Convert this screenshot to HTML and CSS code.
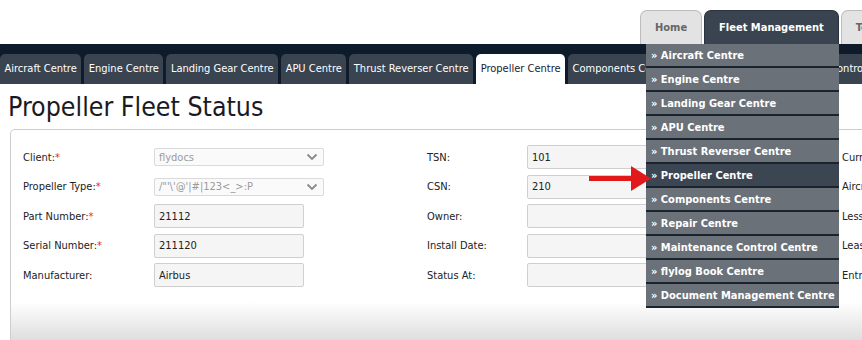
FILE: index.html
```html
<!DOCTYPE html>
<html lang="en">
<head>
    <meta charset="UTF-8">
    <meta name="viewport" content="width=device-width, initial-scale=1.0">
    <title>Propeller Fleet Status</title>
    <link rel="stylesheet" href="styles.css">
</head>
<body>
    <header class="top-bar">
        <nav class="main-tabs">
            <a class="main-tab" href="#">Home</a>
            <a class="main-tab main-tab-active" href="#">Fleet Management</a>
            <a class="main-tab" href="#">Technical</a>
        </nav>
    </header>

    <nav class="sub-nav">
        <a class="sub-tab" href="#">Aircraft Centre</a>
        <a class="sub-tab" href="#">Engine Centre</a>
        <a class="sub-tab" href="#">Landing Gear Centre</a>
        <a class="sub-tab" href="#">APU Centre</a>
        <a class="sub-tab" href="#">Thrust Reverser Centre</a>
        <a class="sub-tab sub-tab-active" href="#">Propeller Centre</a>
        <a class="sub-tab" href="#">Components Centre</a>
        <a class="sub-tab" href="#">Repair Centre</a>
        <a class="sub-tab" href="#">Maintenance Control Centre</a>
        <a class="sub-tab" href="#">flylog Book Centre</a>
    </nav>

    <main class="content">
        <h1 class="page-title">Propeller Fleet Status</h1>
        <section class="panel">
            <form class="status-form">
                <label class="field-label">Client:<span class="req">*</span></label>
                <div class="field"><div class="select-box"><span>flydocs</span><svg class="chevron" width="12" height="8" viewBox="0 0 12 8"><path d="M1.5 1.5 L6 6 L10.5 1.5" fill="none" stroke="#8a8a8a" stroke-width="1.8"/></svg></div></div>
                <label class="field-label">TSN:</label>
                <div class="field"><input class="text-input" type="text" value="101"></div>
                <label class="field-label">Current Status:</label>
                <div class="field"><input class="text-input" type="text"></div>

                <label class="field-label">Propeller Type:<span class="req">*</span></label>
                <div class="field"><div class="select-box"><span>/"'\'@'|#|123&lt;_&gt;:P</span><svg class="chevron" width="12" height="8" viewBox="0 0 12 8"><path d="M1.5 1.5 L6 6 L10.5 1.5" fill="none" stroke="#8a8a8a" stroke-width="1.8"/></svg></div></div>
                <label class="field-label">CSN:</label>
                <div class="field"><input class="text-input" type="text" value="210"></div>
                <label class="field-label">Aircraft:</label>
                <div class="field"><input class="text-input" type="text"></div>

                <label class="field-label">Part Number:<span class="req">*</span></label>
                <div class="field"><input class="text-input" type="text" value="21112"></div>
                <label class="field-label">Owner:</label>
                <div class="field"><input class="text-input" type="text"></div>
                <label class="field-label">Lessor:</label>
                <div class="field"><input class="text-input" type="text"></div>

                <label class="field-label">Serial Number:<span class="req">*</span></label>
                <div class="field"><input class="text-input" type="text" value="211120"></div>
                <label class="field-label">Install Date:</label>
                <div class="field"><input class="text-input" type="text"></div>
                <label class="field-label">Lease Type:</label>
                <div class="field"><input class="text-input" type="text"></div>

                <label class="field-label">Manufacturer:</label>
                <div class="field"><input class="text-input" type="text" value="Airbus"></div>
                <label class="field-label">Status At:</label>
                <div class="field"><input class="text-input" type="text"></div>
                <label class="field-label">Entry Into Service:</label>
                <div class="field"><input class="text-input" type="text"></div>
            </form>
        </section>
    </main>

    <ul class="fleet-menu">
        <li>» Aircraft Centre</li>
        <li>» Engine Centre</li>
        <li>» Landing Gear Centre</li>
        <li>» APU Centre</li>
        <li>» Thrust Reverser Centre</li>
        <li class="menu-active">» Propeller Centre</li>
        <li>» Components Centre</li>
        <li>» Repair Centre</li>
        <li>» Maintenance Control Centre</li>
        <li>» flylog Book Centre</li>
        <li>» Document Management Centre</li>
    </ul>

    <!-- pointer to the current menu entry -->
    <svg class="pointer-arrow" width="64" height="28" viewBox="0 0 64 28">
        <rect x="1" y="11" width="44" height="5" fill="#e2191b"/>
        <polygon points="43,1 63,13.5 43,26" fill="#e2191b"/>
    </svg>
</body>
</html>
```

FILE: styles.css
```css
* {
    box-sizing: border-box;
}
body {
    margin: 0;
    width: 862px;
    height: 340px;
    overflow: hidden;
    position: relative;
    font-family: "DejaVu Sans Condensed", "DejaVu Sans", sans-serif;
    font-size: 11px;
    color: #222;
    background: #fff;
}
.top-bar {
    height: 44px;
    display: flex;
    align-items: flex-end;
    padding-left: 640px;
}
.main-tabs {
    display: flex;
    gap: 2px;
    white-space: nowrap;
}
.main-tab {
    display: block;
    height: 34px;
    line-height: 33px;
    padding: 0 14px;
    font-size: 11px;
    font-weight: bold;
    text-decoration: none;
    color: #666;
    background: #e3e3e3;
    border: 1px solid #bcbcbc;
    border-bottom: none;
    border-radius: 7px 7px 0 0;
}
.main-tab-active {
    color: #fff;
    background: #3a4451;
    border-color: #2a333f;
}
.sub-nav {
    height: 40px;
    padding-top: 10px;
    display: flex;
    gap: 3px;
    white-space: nowrap;
    background: #0d1b2a;
}
.sub-tab {
    flex: none;
    height: 30px;
    line-height: 30px;
    padding: 0 4.5px;
    color: #fff;
    text-decoration: none;
    background: #3a4451;
    border-radius: 5px 5px 0 0;
}
.sub-tab-active {
    color: #1c1c2c;
    background: #fff;
}
.page-title {
    margin: 0;
    height: 45px;
    padding: 7px 0 0 8px;
    font-size: 26.5px;
    font-weight: normal;
    line-height: 32px;
    color: #1a1a24;
}
.panel {
    margin-left: 10px;
    width: 1200px;
    height: 215px;
    padding: 15px 0 0 12px;
    border: 1px solid #cdcdcd;
    border-bottom: none;
    border-radius: 5px 0 0 0;
    background: linear-gradient(to bottom, #fff 0, #fff 172px, #dcdcdc 212px);
}
.status-form {
    display: grid;
    grid-template-columns: 131px 273px 100px 315px 130px 200px;
    grid-auto-rows: 24px;
    row-gap: 5.5px;
    align-items: center;
}
.field-label {
    color: #222;
}
.req {
    color: #e02b27;
}
.field {
    display: flex;
    align-items: center;
}
.text-input {
    width: 150px;
    height: 24px;
    padding: 0 4px;
    font-family: inherit;
    font-size: 11px;
    color: #222;
    background: #f5f5f5;
    border: 1px solid #cfcfcf;
    border-radius: 2px;
}
.select-box {
    width: 170px;
    height: 18px;
    padding: 0 5px 0 4px;
    display: flex;
    align-items: center;
    justify-content: space-between;
    color: #9a9a9a;
    background: #fafafa;
    border: 1px solid #dadada;
    border-radius: 2px;
}
.fleet-menu {
    position: absolute;
    left: 646px;
    top: 44px;
    width: 193px;
    margin: 0;
    padding: 0;
    list-style: none;
}
.fleet-menu li {
    height: 24px;
    line-height: 23px;
    padding-left: 5px;
    font-weight: bold;
    color: #fff;
    white-space: nowrap;
    background: #6b7179;
    border-bottom: 2px solid #1b232d;
}
.fleet-menu .menu-active {
    background: #3c4552;
}
.pointer-arrow {
    position: absolute;
    left: 588px;
    top: 165px;
}
```
